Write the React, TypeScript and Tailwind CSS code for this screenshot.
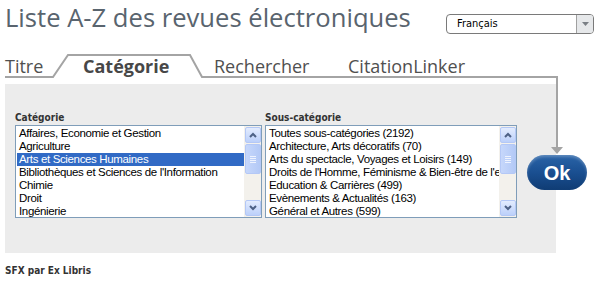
import React from "react";

const cats = [
  "Affaires, Economie et Gestion",
  "Agriculture",
  "Arts et Sciences Humaines",
  "Bibliothèques et Sciences de l'Information",
  "Chimie",
  "Droit",
  "Ingénierie",
];
const subs = [
  "Toutes sous-catégories (2192)",
  "Architecture, Arts décoratifs (70)",
  "Arts du spectacle, Voyages et Loisirs (149)",
  "Droits de l'Homme, Féminisme & Bien-être de l'en",
  "Education & Carrières (499)",
  "Evènements & Actualités (163)",
  "Général et Autres (599)",
];

function ScrollBtn({ up }: { up: boolean }) {
  return (
    <div className="w-[16px] h-[16px] rounded-[2px] border border-[#b4c8f6] bg-gradient-to-b from-[#e3ecfe] to-[#bcd0fa] flex items-center justify-center">
      <svg width="8" height="6" viewBox="0 0 8 6">
        <polyline
          points={up ? "1,5 4,2 7,5" : "1,1 4,4 7,1"}
          fill="none"
          stroke="#4d6185"
          strokeWidth="2"
        />
      </svg>
    </div>
  );
}

function ListBox({ items, selected, width }: { items: string[]; selected: number; width: string }) {
  return (
    <div className={`${width} h-[93px] border border-[#7f9db9] bg-white flex`}>
      <div className="flex-1 overflow-hidden py-[1px] pl-[1px]">
        {items.map((t, i) => (
          <div
            key={i}
            className={`h-[13px] leading-[13px] whitespace-nowrap pl-[2px] text-[11.5px] tracking-[-0.35px] ${
              i === selected ? "bg-[#316ac5] text-white" : "text-black"
            }`}
            style={{ fontFamily: '"Liberation Sans", Arial, sans-serif' }}
          >
            {t}
          </div>
        ))}
      </div>
      <div className="w-[17px] bg-[#f3f1ec] flex flex-col justify-between items-center py-[1px]">
        <div className="flex flex-col gap-[1px]">
          <ScrollBtn up />
          <div className="w-[16px] h-[30px] rounded-[2px] border border-[#b4c8f6] bg-gradient-to-r from-[#c6d7fb] to-[#b3c9f6] flex flex-col items-center justify-center gap-[1px]">
            <div className="w-[6px] h-[1px] bg-[#eef3fe]" />
            <div className="w-[6px] h-[1px] bg-[#eef3fe]" />
            <div className="w-[6px] h-[1px] bg-[#eef3fe]" />
            <div className="w-[6px] h-[1px] bg-[#eef3fe]" />
          </div>
        </div>
        <ScrollBtn up={false} />
      </div>
    </div>
  );
}

export default function App() {
  const label = "text-[10px] font-bold text-[#333] leading-[12px] mb-[1px]";
  const labelFont = { fontFamily: '"DejaVu Sans Condensed", "DejaVu Sans", Verdana, sans-serif' };
  return (
    <div className="relative w-[602px] h-[285px] bg-white overflow-hidden">
      {/* header */}
      <div className="flex items-start justify-between pl-[5px] pr-[8px] h-[50px]">
        <div
          className="text-[25.6px] leading-[36px] text-[#59646e]"
          style={{ fontFamily: '"Open Sans", "Noto Sans", sans-serif' }}
        >
          Liste A-Z des revues électroniques
        </div>
        <div className="mt-[14px] w-[148px] h-[20px] border border-[#7a7a7a] rounded-[4px] flex bg-white overflow-hidden">
          <div
            className="flex-1 pl-[10px] text-[11px] leading-[18px] text-black"
            style={{ fontFamily: '"DejaVu Sans Condensed", Tahoma, sans-serif' }}
          >
            Français
          </div>
          <div className="w-[17px] border-l border-[#a0a0a0] bg-[#e6e8ea] flex items-center justify-center">
            <svg width="7" height="4" viewBox="0 0 7 4">
              <polygon points="0,0 7,0 3.5,4" fill="#7a7f85" />
            </svg>
          </div>
        </div>
      </div>

      {/* tabs */}
      <div
        className="relative h-[28px] flex items-end text-[18px] leading-[24px] text-[#505050]"
        style={{ fontFamily: '"Open Sans", "Noto Sans", sans-serif' }}
      >
        <div className="pl-[5px] w-[83px]">Titre</div>
        <div className="w-[131px] font-bold text-[#474747]">Catégorie</div>
        <div className="w-[134px]">Rechercher</div>
        <div>CitationLinker</div>
      </div>

      {/* panel */}
      <div className="mt-[6px] ml-[5px] w-[551px] h-[169px] bg-[#ececec] pt-[28px] pl-[10px] flex gap-[3px]">
        <div>
          <div className={label} style={labelFont}>Catégorie</div>
          <ListBox items={cats} selected={2} width="w-[247px]" />
        </div>
        <div>
          <div className={label} style={labelFont}>Sous-catégorie</div>
          <ListBox items={subs} selected={-1} width="w-[252px]" />
        </div>
      </div>

      {/* footer */}
      <div className="mt-[10px] pl-[5px] text-[10px] font-bold text-[#333]" style={labelFont}>
        SFX par Ex Libris
      </div>

      {/* tab outline and arrow drawing */}
      <svg className="absolute left-0 top-0 pointer-events-none" width="602" height="285">
        <polyline
          points="5,77 53,77 68,55 190,55 202,77 557,77 557,148"
          fill="none"
          stroke="#a4a4a4"
          strokeWidth="2"
        />
        <polygon points="551,147 563,147 557,154" fill="#a4a4a4" />
      </svg>

      {/* Ok button */}
      <div className="absolute left-[527px] top-[155px] w-[60px] h-[35px] rounded-full bg-gradient-to-b from-[#2a64a8] via-[#1a4f91] to-[#0f3c74] shadow-[inset_0_2px_3px_rgba(255,255,255,0.25)] flex items-center justify-center">
        <span
          className="text-white font-bold text-[20px] leading-none"
          style={{ fontFamily: '"Liberation Sans", Arial, sans-serif' }}
        >
          Ok
        </span>
      </div>
    </div>
  );
}
